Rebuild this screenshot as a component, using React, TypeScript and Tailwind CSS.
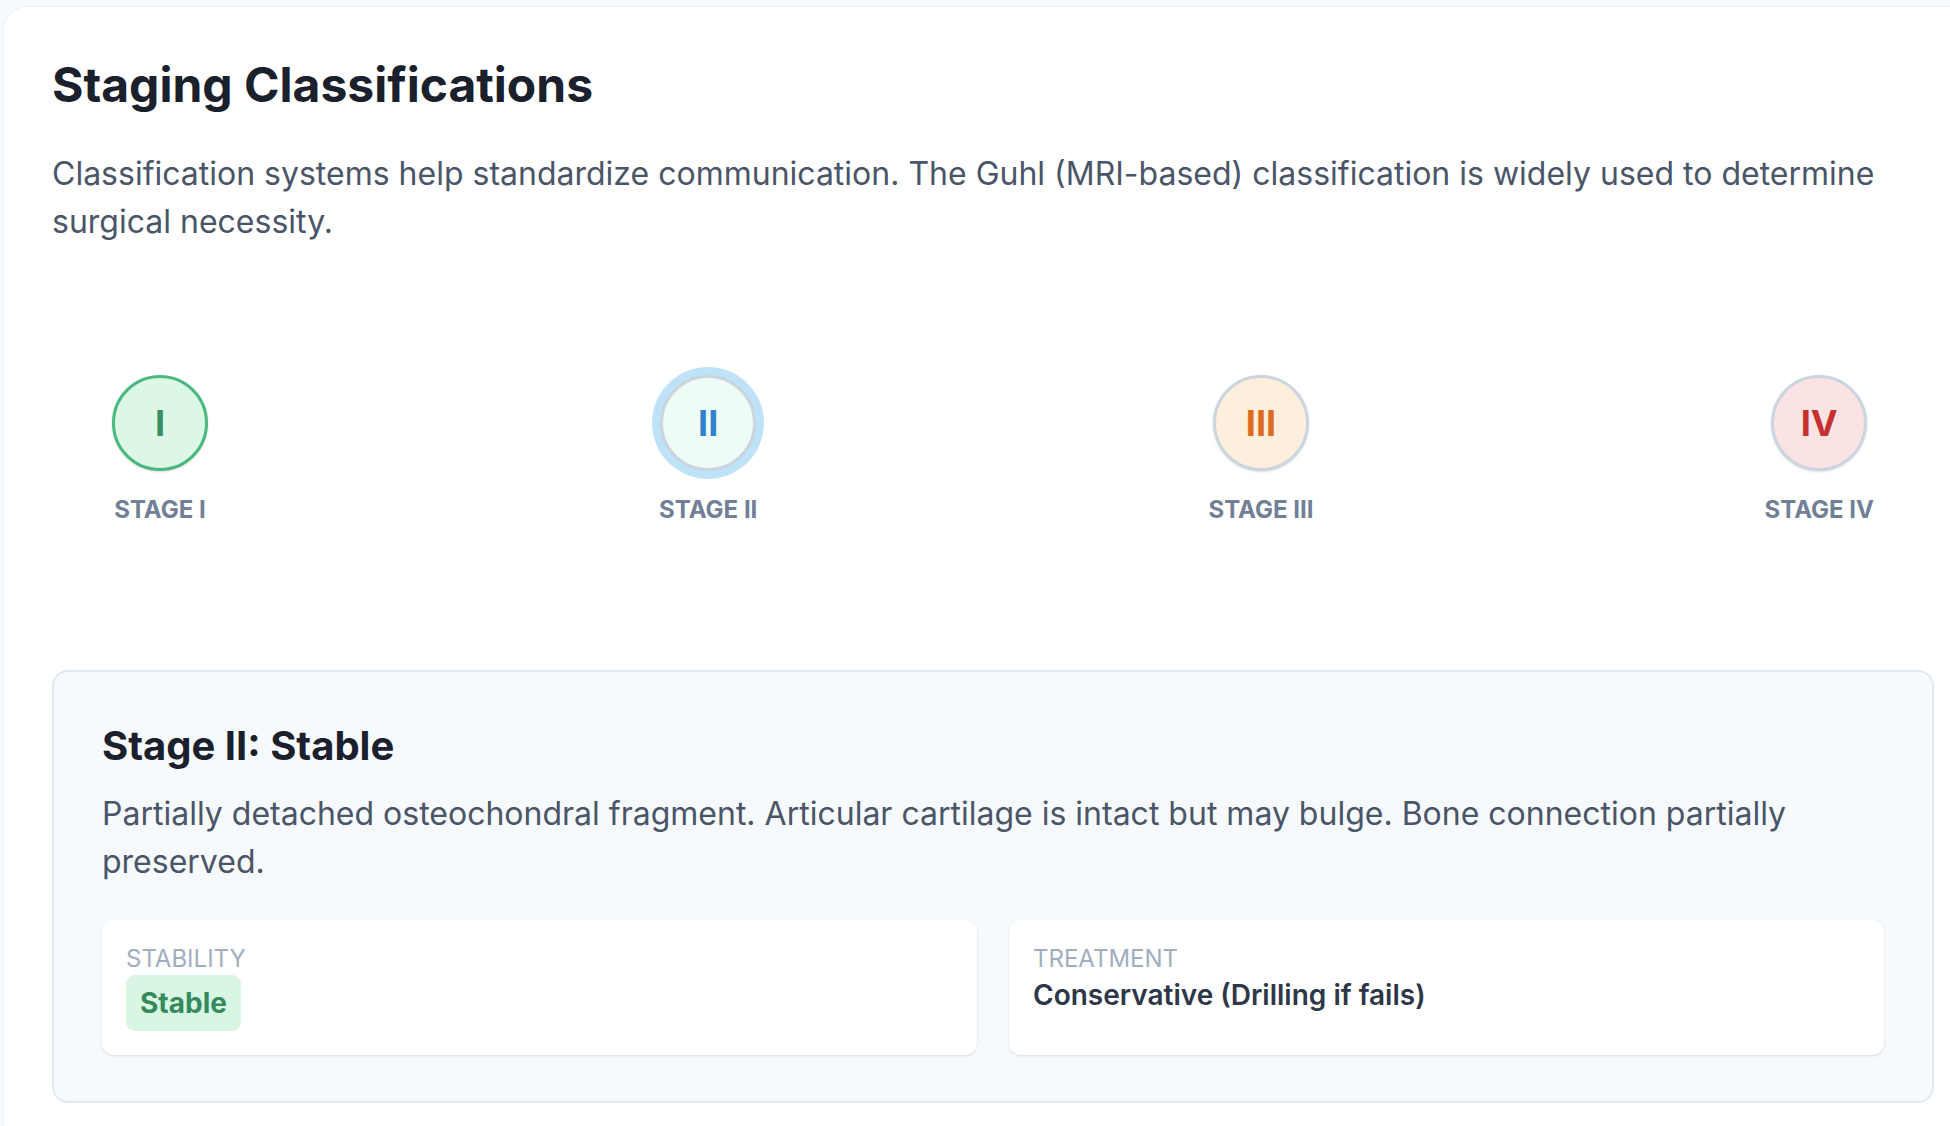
import React from 'react'

type Stage = {
  numeral: string
  label: string
  circle: string
  text: string
  active?: boolean
}

const stages: Stage[] = [
  { numeral: 'I', label: 'Stage I', circle: 'bg-[#dcf7e6] border-[#4ab87f]', text: 'text-[#3a8f62]' },
  { numeral: 'II', label: 'Stage II', circle: 'bg-[#eefcf5] border-[#cbd5e0]', text: 'text-[#3182ce]', active: true },
  { numeral: 'III', label: 'Stage III', circle: 'bg-[#feefdc] border-[#cbd5e0]', text: 'text-[#dd6b20]' },
  { numeral: 'IV', label: 'Stage IV', circle: 'bg-[#fbe3e3] border-[#cbd5e0]', text: 'text-[#c53030]' },
]

export default function App() {
  return (
    <div className="h-[1126px] w-full overflow-hidden bg-[#f7fafc] pl-[3px] pt-[6px] font-[Inter,sans-serif]">
      <div className="min-h-[1200px] w-[1980px] rounded-[24px] border border-[#edf2f7] bg-white px-12 pt-12">
        <h2 className="text-[48px] leading-[60px] font-bold text-[#1a202c]">Staging Classifications</h2>
        <p className="mt-[35px] text-[32px] leading-[48px] text-[#4a5568]">
          Classification systems help standardize communication. The Guhl (MRI-based) classification is widely used
          to determine surgical necessity.
        </p>

        {/* stages */}
        <div className="mt-[129px] flex justify-between px-[60px]">
          {stages.map((s) => (
            <div key={s.label} className="flex flex-col items-center">
              <div
                className={`flex h-24 w-24 items-center justify-center rounded-full border-[3px] shadow-sm ${s.circle} ${
                  s.active ? 'ring-8 ring-[#bee3f8]' : ''
                }`}
              >
                <span className={`text-[36px] leading-none font-bold ${s.text}`}>{s.numeral}</span>
              </div>
              <span className="mt-[21px] text-[24px] leading-[36px] font-bold uppercase text-[#718096]">{s.label}</span>
            </div>
          ))}
        </div>

        {/* detail */}
        <div className="mt-[142px] rounded-2xl border-2 border-[#e2e8f0] bg-[#f7fafc] px-12 pt-12 pb-[46px]">
          <h3 className="text-[40px] leading-[52px] font-bold text-[#1a202c]">Stage II: Stable</h3>
          <p className="mt-[18px] text-[32px] leading-[48px] text-[#4a5568]">
            Partially detached osteochondral fragment. Articular cartilage is intact but may bulge. Bone connection
            partially preserved.
          </p>
          <div className="mt-[34px] grid grid-cols-2 gap-8">
            <div className="rounded-xl bg-white p-6 shadow-sm">
              <p className="text-[24px] leading-[30px] uppercase text-[#a0aec0]">Stability</p>
              <span className="mt-[1px] inline-block rounded-[9px] bg-[#d9f6e2] px-[14px] py-[8px] text-[28px] leading-[40px] font-bold text-[#358a5d]">
                Stable
              </span>
            </div>
            <div className="rounded-xl bg-white p-6 shadow-sm">
              <p className="text-[24px] leading-[30px] uppercase text-[#a0aec0]">Treatment</p>
              <p className="mt-[1px] text-[28px] leading-[40px] font-semibold text-[#2d3748]">Conservative (Drilling if fails)</p>
            </div>
          </div>
        </div>
      </div>
    </div>
  )
}
